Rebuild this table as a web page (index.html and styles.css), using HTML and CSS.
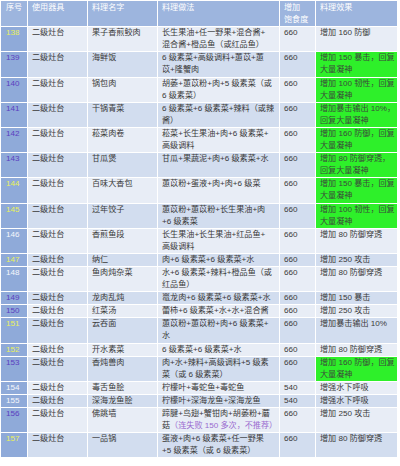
FILE: index.html
```html
<!DOCTYPE html>
<html lang="zh">
<head>
<meta charset="utf-8">
<link rel="stylesheet" href="styles.css">
</head>
<body>
<table class="recipes">
<colgroup>
<col class="c-no"><col class="c-tool"><col class="c-name"><col class="c-how"><col class="c-sat"><col class="c-eff">
</colgroup>
<thead>
<tr><th>序号</th><th>使用器具</th><th>料理名字</th><th>料理做法</th><th>增加<br>饱食度</th><th>料理效果</th></tr>
</thead>
<tbody>
<tr class="lt"><td class="no y">138</td><td>二级灶台</td><td>果子香煎鲛肉</td><td>长生果油+任一野果+混合酱+<br>混合酱+橙品鱼（或红品鱼）</td><td>660</td><td>增加 160 防御</td></tr>
<tr class="dk"><td class="no p">139</td><td>二级灶台</td><td>海鲜饭</td><td>6 级素菜+高级调料+蕙苡+蕙<br>苡+隆蟹肉</td><td>660</td><td class="g">增加 150 暴击，回复<br>大量凝神</td></tr>
<tr class="lt"><td class="no p">140</td><td>二级灶台</td><td>锅包肉</td><td>胡萎+蕙苡粉+肉+5 级素菜（或<br>6 级素菜）</td><td>660</td><td class="g">增加 100 韧性，回复<br>大量凝神</td></tr>
<tr class="dk"><td class="no p">141</td><td>二级灶台</td><td>干锅青菜</td><td>6 级素菜+6 级素菜+辣料（或辣<br>酱）</td><td>660</td><td class="g">增加暴击输出 10%，<br>回复大量凝神</td></tr>
<tr class="lt"><td class="no p">142</td><td>二级灶台</td><td>菘菜肉卷</td><td>菘菜+长生果油+肉+6 级素菜+<br>高级调料</td><td>660</td><td class="g">增加 160 防御，回复<br>大量凝神</td></tr>
<tr class="dk"><td class="no p">143</td><td>二级灶台</td><td>甘瓜煲</td><td>甘瓜+果蔬泥+肉+6 级素菜+水</td><td>660</td><td class="g">增加 80 防御穿透，<br>回复大量凝神</td></tr>
<tr class="lt"><td class="no y">144</td><td>二级灶台</td><td>百味大香包</td><td>蕙苡粉+蛋液+肉+肉+6 级菜</td><td>660</td><td class="g">增加 150 暴击，回复<br>大量凝神</td></tr>
<tr class="dk"><td class="no y">145</td><td>二级灶台</td><td>过年饺子</td><td>蕙苡粉+蕙苡粉+长生果油+肉<br>+6 级素菜</td><td>660</td><td class="g">增加 100 韧性，回复<br>大量凝神</td></tr>
<tr class="lt"><td class="no w">146</td><td>二级灶台</td><td>香煎鱼段</td><td>长生果油+长生果油+红品鱼+<br>高级调料</td><td>660</td><td>增加 80 防御穿透</td></tr>
<tr class="dk"><td class="no y">147</td><td>二级灶台</td><td>纳仁</td><td>肉+6 级素菜+6 级素菜+水</td><td>660</td><td>增加 250 攻击</td></tr>
<tr class="lt"><td class="no w">148</td><td>二级灶台</td><td>鱼肉炖杂菜</td><td>水+6 级素菜+辣料+橙品鱼（或<br>红品鱼）</td><td>660</td><td>增加 80 防御穿透</td></tr>
<tr class="dk"><td class="no p">149</td><td>二级灶台</td><td>龙肉乱炖</td><td>鼍龙肉+6 级素菜+6 级素菜+水</td><td>660</td><td>增加 150 暴击</td></tr>
<tr class="lt"><td class="no p">150</td><td>二级灶台</td><td>红菜汤</td><td>蕾柿+6 级素菜+水+水+混合酱</td><td>660</td><td>增加 250 攻击</td></tr>
<tr class="dk"><td class="no y">151</td><td>二级灶台</td><td>云吞面</td><td>蕙苡粉+蕙苡粉+肉+6 级素菜+<br>水</td><td>660</td><td>增加暴击输出 10%</td></tr>
<tr class="lt"><td class="no y">152</td><td>二级灶台</td><td>开水素菜</td><td>6 级素菜+6 级素菜+水</td><td>660</td><td>增加 80 防御穿透</td></tr>
<tr class="dk"><td class="no p">153</td><td>二级灶台</td><td>香炖兽肉</td><td>肉+水+辣料+高级调料+5 级素<br>菜（或 6 级素菜）</td><td>660</td><td class="g">增加 160 防御，回复<br>大量凝神</td></tr>
<tr class="lt"><td class="no w">154</td><td>二级灶台</td><td>毒舌鱼脍</td><td>柠檬叶+毒蛇鱼+毒蛇鱼</td><td>540</td><td>增强水下呼吸</td></tr>
<tr class="dk"><td class="no w">155</td><td>二级灶台</td><td>深海龙鱼脍</td><td>柠檬叶+深海龙鱼+深海龙鱼</td><td>540</td><td>增强水下呼吸</td></tr>
<tr class="lt"><td class="no p">156</td><td>二级灶台</td><td>佛跳墙</td><td>蹄腱+鸟翅+蟹钳肉+胡萎粉+蘑<br>菇<span class="note">（连失败 150 多次，不推荐）</span></td><td>660</td><td>增加 250 攻击</td></tr>
<tr class="dk"><td class="no y">157</td><td>二级灶台</td><td>一品锅</td><td>蛋液+肉+6 级素菜+任一野果<br>+5 级素菜（或 6 级素菜）</td><td>660</td><td>增加 80 防御穿透</td></tr>
</tbody>
</table>
</body>
</html>
```

FILE: styles.css
```css
html, body {
  margin: 0;
  padding: 0;
  background: #ffffff;
}

.recipes {
  border-collapse: collapse;
  table-layout: fixed;
  width: 397px;
  font-family: "Liberation Sans", "Noto Sans CJK SC", sans-serif;
  font-size: 8.1px;
  line-height: 12.1px;
  color: #3a3a3a;
}

.c-no { width: 27px; }
.c-tool { width: 60px; }
.c-name { width: 70px; }
.c-how { width: 122px; }
.c-sat { width: 36px; }
.c-eff { width: 82px; }

.recipes th,
.recipes td {
  border: 1px solid #ffffff;
  padding: 0 0 0 4px;
  vertical-align: top;
  text-align: left;
  white-space: nowrap;
}

.recipes th {
  background: #9db5de;
  color: #ffffff;
  font-weight: normal;
  padding-top: 1px;
}

.recipes td:first-child,
.recipes th:first-child {
  padding-left: 5px;
}

.lt td { background: #e8edf6; }
.dk td { background: #d2ddef; }

.recipes td.no { background: #8faad9; }
.no.y { color: #e8f05a; }
.no.p { color: #5b3fc0; }
.no.w { color: #f4f6fb; }

.recipes td.g {
  background: #2ef02a;
  color: #3b4a3b;
}

.note { color: #9a6bd0; }
```
